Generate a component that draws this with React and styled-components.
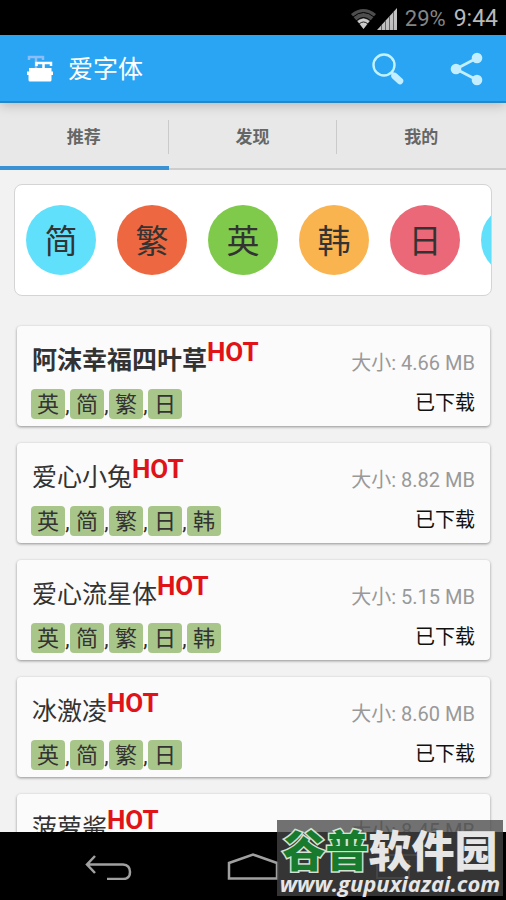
import React, { useState } from "react";
import styled, { createGlobalStyle, css } from "styled-components";

const GlobalStyle = createGlobalStyle`
  * { box-sizing: border-box; }
  body {
    margin: 0;
    background: #f2f2f2;
    font-family: Roboto, "Noto Sans CJK SC", sans-serif;
  }
  button { border: 0; padding: 0; background: none; font: inherit; cursor: pointer; }
`;

const Screen = styled.div`
  position: relative;
  display: flex;
  flex-direction: column;
  height: 100vh;
  overflow: hidden;
`;

const StatusBar = styled.div`
  flex: none;
  display: flex;
  align-items: center;
  justify-content: flex-end;
  height: 35px;
  padding: 2px 8px 0;
  background: #000;
  color: #b9b9b9;
  font-size: 23px;
  line-height: 32px;
`;

const Battery = styled.span`
  margin: 0 8px;
  font-size: 22px;
  color: #858585;
`;

const AppBar = styled.header`
  position: relative;
  z-index: 1;
  flex: none;
  display: flex;
  align-items: center;
  height: 68px;
  padding: 2px 22px 0 25px;
  background: #2aa5f3;
  border-bottom: 2px solid #2388c8;
  box-shadow: 0 1px 12px rgba(0, 0, 0, 0.25);
`;

const AppTitle = styled.h1`
  flex: 1;
  margin: 0 0 0 13px;
  padding-top: 2px;
  color: #fff;
  font-size: 25px;
  line-height: 36px;
  font-weight: 400;
`;

const IconButton = styled.button`
  display: flex;
  margin-left: 45px;
`;

const Tabs = styled.nav`
  flex: none;
  display: grid;
  grid-template-columns: repeat(3, 1fr);
  height: 67px;
  background: #e8e8e8;
`;

const Tab = styled.button`
  display: flex;
  align-items: center;
  height: 67px;
  padding-top: 2px;
  color: #666;
  font-size: 17px;
  font-weight: 700;
  border-bottom: 2px solid #cdcdcd;
  ${(p) => p.$active && css`
    padding-top: 4px;
    border-bottom: 4px solid #3a92d4;
  `}
`;

const TabLabel = styled.span`
  flex: 1;
  line-height: 34px;
  border-right: 1px solid ${(p) => (p.$last ? "transparent" : "#cacaca")};
`;

const Content = styled.main`
  flex: 1;
  min-height: 0;
  overflow: hidden;
  padding: 14px;
`;

const LanguageStrip = styled.div`
  display: flex;
  align-items: center;
  gap: 21px;
  height: 112px;
  padding: 0 11px;
  overflow: hidden;
  background: #fff;
  border: 1px solid #d4d4d4;
  border-radius: 8px;
`;

const LanguageCircle = styled.button`
  flex: none;
  width: 70px;
  height: 70px;
  padding-top: 4px;
  border-radius: 50%;
  background: ${(p) => p.$color};
  color: #333;
  font-size: 33px;
  line-height: 66px;
`;

const FontList = styled.ul`
  display: flex;
  flex-direction: column;
  gap: 17px;
  margin: 30px 2px 0 3px;
  padding: 0;
  list-style: none;
`;

const FontCard = styled.li`
  flex: none;
  display: flex;
  justify-content: space-between;
  height: 100px;
  padding: 16px 15px 0 14px;
  background: #fbfbfb;
  border-radius: 4px;
  box-shadow: 0 1px 3px rgba(0, 0, 0, 0.4);
`;

const CardSide = styled.div`
  display: flex;
  flex-direction: column;
  align-items: ${(p) => (p.$end ? "flex-end" : "flex-start")};
  gap: ${(p) => (p.$end ? "8px" : "11px")};
  padding-top: ${(p) => (p.$end ? "5px" : "0")};
`;

const NameRow = styled.div`
  display: flex;
  align-items: flex-start;
  height: 36px;
  padding-left: 1px;
`;

const FontName = styled.h2`
  margin: 0;
  color: #333;
  font-size: 25px;
  line-height: 38px;
  font-weight: ${(p) => p.$weight};
`;

const Hot = styled.strong`
  color: #e01319;
  font-size: 26px;
  line-height: 20px;
`;

const Tags = styled.div`
  display: flex;
  height: 30px;
  color: #333;
  font-size: 22px;
  line-height: 32px;
`;

const Tag = styled.span`
  width: 34px;
  height: 30px;
  border-radius: 4px;
  background: #a9c68a;
  text-align: center;
`;

const Comma = styled.span`
  width: 5px;
  text-align: center;
`;

const Size = styled.span`
  color: #999;
  font-size: 20px;
  line-height: 32px;
`;

const State = styled.button`
  color: #111;
  font-size: 20px;
  line-height: 32px;
`;

const NavBar = styled.nav`
  flex: none;
  display: flex;
  justify-content: space-around;
  align-items: center;
  height: 68px;
  padding: 0 36px;
  background: #000;
`;

const NavButton = styled.button`
  display: flex;
`;

const Watermark = styled.div`
  position: absolute;
  right: 3px;
  bottom: 4px;
  width: 226px;
  height: 76px;
  background: rgba(70, 70, 70, 0.76);
  color: #e6e6e6;
  font-weight: 700;
  text-align: center;
  white-space: nowrap;
`;

const WatermarkName = styled.div`
  margin-top: 5px;
  font-family: "Noto Sans CJK SC", sans-serif;
  font-size: 43px;
  line-height: 46px;
  font-weight: 900;
`;

const WatermarkGreen = styled.span`
  color: #187a2c;
  -webkit-text-stroke: 3px #d5e2d3;
  paint-order: stroke fill;
`;

const WatermarkUrl = styled.div`
  font-family: "Open Sans", sans-serif;
  font-size: 22px;
  line-height: 24px;
  font-style: italic;
`;

const WifiIcon = () => (
  <svg width="27" height="22" viewBox="0 0 27 22" fill="none" aria-hidden="true">
    <path d="M1 6 Q13.500 -4 26 6 L13.500 21Z" fill="#4d4d4d" />
    <path d="M3 9 Q13.500 0 24 9M6 13 Q13.500 6 21 13" stroke="#000" strokeWidth="1" />
    <path d="M7.500 13 Q13.500 8 19.500 13 L13.500 21Z" fill="#ccc" />
    <path d="M9 16 Q13.500 12 18 16" stroke="#222" strokeWidth="1" />
  </svg>
);

const SignalIcon = () => (
  <svg width="20" height="22" viewBox="0 0 20 22" aria-hidden="true">
    <path d="M0 22 L20 0V22Z" fill="#c2c2c2" />
    <path d="M4.500 17V22M8.500 13V22M12.500 8V22M16.500 4V22" stroke="#666" strokeWidth="1" />
  </svg>
);

const LogoIcon = () => (
  <svg width="30" height="30" viewBox="0 0 30 30" fill="none" aria-hidden="true">
    <path d="M4 6V3H18V6M11 3V14" stroke="#8dbdf5" strokeWidth="2.500" />
    <path d="M11.500 12V9H26V12M18.500 9V16" stroke="#fff" strokeWidth="2.500" />
    <path d="M4 14H26.500V17.500H28V21H26.500V26Q26.500 27.500 25 27.500H5Q3.500 27.500 3.500 26V21H2V17.500H4Z" fill="#fff" />
  </svg>
);

const SearchIcon = () => (
  <svg width="34" height="34" viewBox="0 0 34 34" fill="none" aria-hidden="true">
    <circle cx="13" cy="13" r="10.500" stroke="#c3f2ff" strokeWidth="2.400" />
    <path d="M20 20L24 24" stroke="#c3f2ff" strokeWidth="3" />
    <path d="M23.500 24L29 29" stroke="#c3eeff" strokeWidth="6.500" strokeLinecap="round" />
  </svg>
);

const ShareIcon = () => (
  <svg width="34" height="34" viewBox="0 0 34 34" fill="#c3eeff" aria-hidden="true">
    <path d="M27 6L6 17L27 28" fill="none" stroke="#c3eeff" strokeWidth="2.800" />
    <circle cx="27" cy="6" r="5.300" />
    <circle cx="6" cy="17" r="5.300" />
    <circle cx="27" cy="28" r="5.300" />
  </svg>
);

const BackIcon = () => (
  <svg width="48" height="28" viewBox="0 0 48 28" fill="none" stroke="#a0a0a0" strokeWidth="2.500" aria-hidden="true">
    <path d="M11 4L3 12.500L11 21M3 12.500H39Q46 13 46 20T39 27H23" />
  </svg>
);

const HomeIcon = () => (
  <svg width="52" height="28" viewBox="0 0 52 28" fill="none" stroke="#a0a0a0" strokeWidth="2.500" aria-hidden="true">
    <path d="M2 26.500V11L26 2.500L50 11V26.500Z" />
  </svg>
);

const RecentIcon = () => (
  <svg width="48" height="28" viewBox="0 0 48 28" fill="none" stroke="#444" strokeWidth="2" aria-hidden="true">
    <path d="M3 9H35V26H3ZM10 3H44V21" />
  </svg>
);

const TABS = ["推荐", "发现", "我的"];

const LANGUAGES = [
  { label: "简", color: "#60e0fb" },
  { label: "繁", color: "#ed6840" },
  { label: "英", color: "#7fca4b" },
  { label: "韩", color: "#f9b450" },
  { label: "日", color: "#ea6877" },
  { label: "", color: "#60e0fb" },
];

const FONTS = [
  { name: "阿沫幸福四叶草", weight: 700, size: "4.66 MB", tags: ["英", "简", "繁", "日"] },
  { name: "爱心小兔", weight: 400, size: "8.82 MB", tags: ["英", "简", "繁", "日", "韩"] },
  { name: "爱心流星体", weight: 400, size: "5.15 MB", tags: ["英", "简", "繁", "日", "韩"] },
  { name: "冰激凌", weight: 400, size: "8.60 MB", tags: ["英", "简", "繁", "日"] },
  { name: "菠萝酱", weight: 400, size: "8.45 MB", tags: ["英", "简", "繁", "日"] },
];

export default function App() {
  const [active, setActive] = useState(0);
  return (
    <Screen lang="zh-CN">
      <GlobalStyle />
      <StatusBar>
        <WifiIcon />
        <SignalIcon />
        <Battery>29%</Battery>
        <span>9:44</span>
      </StatusBar>
      <AppBar>
        <LogoIcon />
        <AppTitle>爱字体</AppTitle>
        <IconButton aria-label="搜索"><SearchIcon /></IconButton>
        <IconButton aria-label="分享"><ShareIcon /></IconButton>
      </AppBar>
      <Tabs>
        {TABS.map((label, i) => (
          <Tab key={label} $active={i === active} onClick={() => setActive(i)}>
            <TabLabel $last={i === TABS.length - 1}>{label}</TabLabel>
          </Tab>
        ))}
      </Tabs>
      <Content>
        <LanguageStrip>
          {LANGUAGES.map(({ label, color }, i) => (
            <LanguageCircle key={i} $color={color} aria-label={label || "更多"}>{label}</LanguageCircle>
          ))}
        </LanguageStrip>
        <FontList>
          {FONTS.map((font) => (
            <FontCard key={font.name}>
              <CardSide>
                <NameRow>
                  <FontName $weight={font.weight}>{font.name}</FontName>
                  <Hot>HOT</Hot>
                </NameRow>
                <Tags>
                  {font.tags.map((tag, i) => (
                    <React.Fragment key={tag}>
                      {i > 0 && <Comma>,</Comma>}
                      <Tag>{tag}</Tag>
                    </React.Fragment>
                  ))}
                </Tags>
              </CardSide>
              <CardSide $end>
                <Size>大小: {font.size}</Size>
                <State>已下载</State>
              </CardSide>
            </FontCard>
          ))}
        </FontList>
      </Content>
      <NavBar>
        <NavButton aria-label="返回"><BackIcon /></NavButton>
        <NavButton aria-label="主页"><HomeIcon /></NavButton>
        <NavButton aria-label="最近任务"><RecentIcon /></NavButton>
      </NavBar>
      <Watermark>
        <WatermarkName><WatermarkGreen>谷普</WatermarkGreen>软件园</WatermarkName>
        <WatermarkUrl>www.gupuxiazai.com</WatermarkUrl>
      </Watermark>
    </Screen>
  );
}
